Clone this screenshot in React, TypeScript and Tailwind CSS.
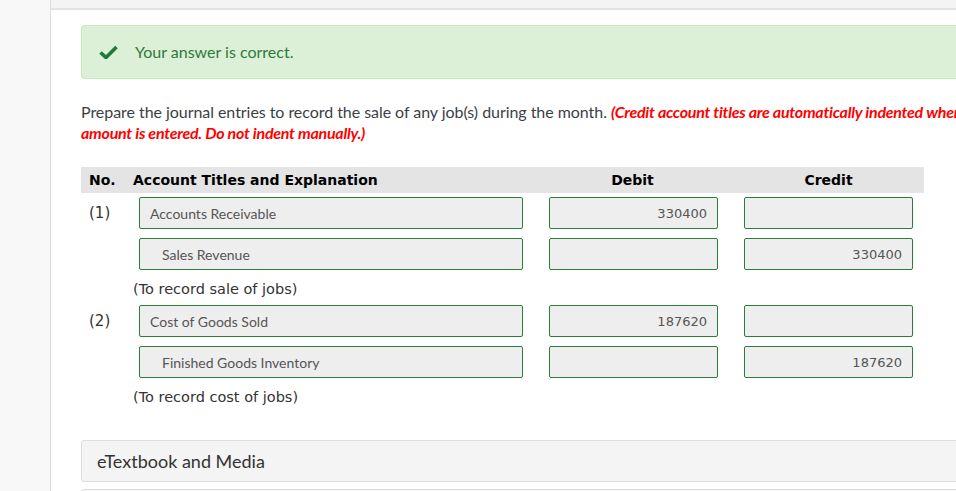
import React from 'react';

type Line = { account: string; debit: string; credit: string; indent?: boolean; no?: string };

const entries: { lines: Line[]; note: string }[] = [
  {
    lines: [
      { no: '(1)', account: 'Accounts Receivable', debit: '330400', credit: '' },
      { account: 'Sales Revenue', debit: '', credit: '330400', indent: true },
    ],
    note: '(To record sale of jobs)',
  },
  {
    lines: [
      { no: '(2)', account: 'Cost of Goods Sold', debit: '187620', credit: '' },
      { account: 'Finished Goods Inventory', debit: '', credit: '187620', indent: true },
    ],
    note: '(To record cost of jobs)',
  },
];

const lato = { fontFamily: 'Lato, "Open Sans", sans-serif' };
const dejavu = { fontFamily: '"DejaVu Sans", Verdana, sans-serif' };

const App: React.FC = () => {
  return (
    <div className="flex h-[491px] w-[956px] overflow-hidden bg-white" style={lato}>
      {/* left rail */}
      <div className="w-[51px] shrink-0 border-r border-[#dcdcdc] bg-[#f8f8f8]"></div>

      <div className="flex-1 min-w-0">
        <div className="h-[10px] border-b-2 border-[#e3e3e3] bg-[#f4f4f4]"></div>

        <div className="pl-[30px] pt-[15px]">
          {/* success alert */}
          <div className="flex h-[54px] w-[900px] items-center rounded-[3px] border border-[#c9e8c0] bg-[#dcf0d7]">
            <svg className="ml-[17px] h-[14px] w-[19px]" viewBox="0 0 19 14">
              <path d="M1.5 7.5 L7 12.5 L17.5 2" fill="none" stroke="#1f7a3a" strokeWidth="3.6" strokeLinejoin="miter" />
            </svg>
            <span className="ml-[17px] text-[16px] text-[#2e7a3c]">Your answer is correct.</span>
          </div>

          {/* instructions */}
          <p className="mt-[22px] w-[900px] text-[16px] leading-[21px] tracking-[-0.05px] text-[#3b3f45]">
            Prepare the journal entries to record the sale of any job(s) during the month.{' '}
            <span className="font-bold italic tracking-[-0.25px] text-[#ff0000]">
              (Credit account titles are automatically indented when amount is entered. Do not indent manually.)
            </span>
          </p>

          {/* table */}
          <div className="mt-[24px] w-[843px]">
            <div className="flex h-[26px] items-center bg-[#e4e4e4] text-[14px] font-bold text-black" style={dejavu}>
              <div className="w-[52px] pl-[8px]">No.</div>
              <div className="w-[415px]">Account Titles and Explanation</div>
              <div className="w-[169px] text-center">Debit</div>
              <div className="ml-[27px] w-[169px] text-center">Credit</div>
            </div>

            {entries.map((e, i) => (
              <div key={i} className="pt-[4px]">
                {e.lines.map((l, j) => (
                  <div key={j} className="flex items-center pb-[9px]">
                    <div className="w-[58px] pl-[8px] text-[15px] text-[#333]" style={dejavu}>
                      {l.no}
                    </div>
                    <div
                      className={`flex h-[32px] w-[384px] items-center rounded-[2px] border border-[#2a7d3a] bg-[#eeeeee] text-[14px] text-[#555] ${
                        l.indent ? 'pl-[22px]' : 'pl-[10px]'
                      }`}
                    >
                      {l.account}
                    </div>
                    <div
                      className="ml-[26px] flex h-[32px] w-[169px] items-center justify-end rounded-[2px] border border-[#2a7d3a] bg-[#eeeeee] pr-[10px] pt-[2px] text-[13px] text-[#555]"
                      style={dejavu}
                    >
                      {l.debit}
                    </div>
                    <div
                      className="ml-[26px] flex h-[32px] w-[169px] items-center justify-end rounded-[2px] border border-[#2a7d3a] bg-[#eeeeee] pr-[10px] pt-[2px] text-[13px] text-[#555]"
                      style={dejavu}
                    >
                      {l.credit}
                    </div>
                  </div>
                ))}
                <div className="pb-[2px] pl-[52px] text-[14.5px] leading-[20px] text-[#333]" style={dejavu}>
                  {e.note}
                </div>
              </div>
            ))}
          </div>

          {/* etextbook */}
          <div className="mt-[31px] flex h-[42px] w-[900px] items-center rounded-[3px] border border-[#dddddd] bg-[#f4f4f4] pl-[15px] text-[18px] text-[#333]">
            eTextbook and Media
          </div>
          <div className="mt-[7px] h-[10px] w-[900px] rounded-t-[3px] border border-[#dddddd] bg-[#f4f4f4]"></div>
        </div>
      </div>
    </div>
  );
};

export default App;
